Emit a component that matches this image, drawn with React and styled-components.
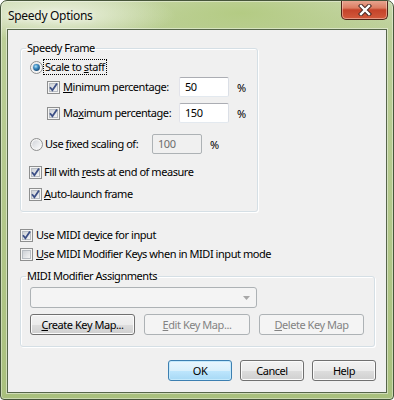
import React from 'react';
import styled, { createGlobalStyle } from 'styled-components';

const GlobalStyle = createGlobalStyle`
    html, body {
        margin: 0;
        padding: 0;
        background: #ffffff;
    }
    body {
        font-family: "Noto Sans", "DejaVu Sans", sans-serif;
        font-size: 11px;
        letter-spacing: -0.45px;
        color: #000;
    }
`;

const Window = styled.div`
    width: 394px;
    height: 400px;
    box-sizing: border-box;
    display: flex;
    flex-direction: column;
    border: 1px solid #46553a;
    border-radius: 7px 7px 4px 4px;
    overflow: hidden;
    background:
        radial-gradient(ellipse 120px 26px at 55px 14px, rgba(238, 243, 226, 0.95), rgba(238, 243, 226, 0)),
        radial-gradient(ellipse 160px 40px at 240px 12px, rgba(178, 202, 128, 0.9), rgba(178, 202, 128, 0)),
        linear-gradient(to bottom, #c9d8ad 0px, #bccf98 30px, #a9c07d 100%);
    box-shadow: inset 0 0 0 1px rgba(255, 255, 255, 0.4);
`;

const TitleBar = styled.div`
    height: 28px;
    flex: none;
    display: flex;
    align-items: flex-start;
    justify-content: space-between;
    padding-left: 7px;
`;

const Title = styled.div`
    margin-top: 7px;
    font-size: 12px;
    line-height: 15px;
    letter-spacing: -0.3px;
    color: #0a0a0a;
    text-shadow: 0 0 6px rgba(255, 255, 255, 0.9);
`;

const CloseButton = styled.div`
    width: 47px;
    height: 20px;
    margin-right: 5px;
    margin-top: -1px;
    box-sizing: border-box;
    border: 1px solid #4f2418;
    border-top: none;
    border-radius: 0 0 5px 5px;
    background: linear-gradient(to bottom, #e9a995 0%, #dc7d62 42%, #c5432a 52%, #d25a3c 100%);
    box-shadow: inset 0 0 0 1px rgba(255, 230, 220, 0.45);
    display: flex;
    align-items: center;
    justify-content: center;
`;

const Client = styled.div`
    flex: 1;
    margin: 0 6px 6px 6px;
    border: 1px solid #56664a;
    box-shadow: 0 0 0 1px rgba(255, 255, 255, 0.45);
    background: #f0f0f0;
    padding: 11px 10px 0 12px;
    display: flex;
    flex-direction: column;
    align-items: flex-start;
`;

const GroupBox = styled.fieldset`
    margin: ${p => p.$mt || 0}px 0 0 0;
    padding: 0;
    width: ${p => p.$width}px;
    box-sizing: border-box;
    border: 1px solid #d5dfe5;
    border-radius: 3px;
    box-shadow: inset 1px 1px 0 #fff, 1px 1px 0 #fff;
    min-width: 0;
`;

const Caption = styled.legend`
    padding: 0 1px;
    margin-left: 5px;
    line-height: 14px;
`;

const GroupBody = styled.div`
    padding: ${p => p.$pad};
`;

const Row = styled.div`
    display: flex;
    align-items: center;
    height: ${p => p.$h || 16}px;
    margin-top: ${p => p.$mt || 0}px;
    padding-left: ${p => p.$indent || 0}px;
`;

const Label = styled.span`
    flex: none;
    width: ${p => (p.$w ? `${p.$w}px` : 'auto')};
    margin-left: ${p => (p.$gap === undefined ? 2 : p.$gap)}px;
    white-space: nowrap;
    line-height: 14px;
    ${p => p.$focus && `
        outline: 1px dotted #000;
        outline-offset: 0;
        padding: 0 1px;
        margin-left: 1px;
    `}
`;

const U = styled.span`
    text-decoration: underline;
    text-underline-offset: 1px;
`;

const TextBox = styled.div`
    flex: none;
    width: 50px;
    height: 20px;
    box-sizing: border-box;
    border: 1px solid;
    border-radius: 2px;
    border-color: ${p => (p.$disabled ? '#adb2b5' : '#abadb3 #dbdfe6 #e3e9ef #e2e3ea')};
    background: ${p => (p.$disabled ? '#f0f0f0' : '#fff')};
    color: ${p => (p.$disabled ? '#6d6d6d' : '#000')};
    padding-left: 5px;
    line-height: 18px;
`;

const Percent = styled.span`
    margin-left: 8px;
    color: #000;
`;

const Combo = styled.div`
    width: 227px;
    height: 21px;
    box-sizing: border-box;
    border: 1px solid #adb2b5;
    border-radius: 3px;
    background: #f4f4f4;
    display: flex;
    align-items: center;
    justify-content: flex-end;
    padding-right: 6px;
`;

const ButtonRow = styled.div`
    display: flex;
    gap: ${p => p.$gap}px;
    margin-top: ${p => p.$mt || 0}px;
    align-self: ${p => (p.$end ? 'flex-end' : 'auto')};
`;

const buttonSkins = {
    normal: `
        border-color: #707070;
        background: linear-gradient(#f2f2f2 0%, #ebebeb 50%, #dddddd 51%, #cfcfcf 100%);
        box-shadow: inset 0 0 0 1px #fbfbfb;
        color: #000;
    `,
    default: `
        border-color: #3c7fb1;
        background: linear-gradient(#eaf6fd 0%, #d9f0fc 50%, #bee6fd 51%, #a7d9f5 100%);
        box-shadow: inset 0 0 0 1px #c4e9fc;
        color: #000;
    `,
    disabled: `
        border-color: #adb2b5;
        background: #f4f4f4;
        color: #838383;
    `,
};

const Button = styled.div`
    width: ${p => p.$w}px;
    height: 21px;
    box-sizing: border-box;
    border: 1px solid;
    border-radius: 3px;
    display: flex;
    align-items: center;
    justify-content: center;
    ${p => buttonSkins[p.$skin || 'normal']}
`;

const CheckBox = ({ checked }) => (
    <svg width="13" height="13" viewBox="0 0 13 13" style={{ flex: 'none' }}>
        <defs>
            <linearGradient id="cbFill" x1="0" y1="0" x2="1" y2="1">
                <stop offset="0" stopColor="#cbcfd5" />
                <stop offset="1" stopColor="#f6f6f6" />
            </linearGradient>
        </defs>
        <rect x="0.5" y="0.5" width="12" height="12" fill="#f4f4f4" stroke="#8e8f8f" />
        <rect x="2.5" y="2.5" width="8" height="8" fill="url(#cbFill)" stroke="#b7bcc2" />
        {checked && (
            <path d="M3 6.2 L5.4 9.3 L10 2.6" fill="none" stroke="#3c4f86" strokeWidth="1.8" />
        )}
    </svg>
);

const Radio = ({ checked }) => (
    <svg width="13" height="13" viewBox="0 0 13 13" style={{ flex: 'none' }}>
        <defs>
            <linearGradient id="rbFill" x1="0" y1="0" x2="1" y2="1">
                <stop offset="0" stopColor="#d2d5da" />
                <stop offset="1" stopColor="#fafafa" />
            </linearGradient>
            <radialGradient id="rbDot" cx="0.4" cy="0.35" r="0.7">
                <stop offset="0" stopColor="#b4e4f8" />
                <stop offset="0.45" stopColor="#3c8dc4" />
                <stop offset="1" stopColor="#16446e" />
            </radialGradient>
        </defs>
        <circle cx="6.5" cy="6.5" r="6" fill="#f4f4f4" stroke="#8e8f8f" />
        <circle cx="6.5" cy="6.5" r="4.3" fill="url(#rbFill)" />
        {checked && <circle cx="6.5" cy="6.5" r="3.4" fill="url(#rbDot)" />}
    </svg>
);

const CloseGlyph = () => (
    <svg width="14" height="12" viewBox="0 0 14 12">
        <path d="M3 2 L11 10 M11 2 L3 10" stroke="#4a2a24" strokeWidth="4.4" strokeLinecap="square" />
        <path d="M3 2 L11 10 M11 2 L3 10" stroke="#ffffff" strokeWidth="2.4" strokeLinecap="square" />
    </svg>
);

const ComboArrow = () => (
    <svg width="7" height="4" viewBox="0 0 7 4">
        <path d="M0 0 H7 L3.5 4 Z" fill="#a7a7a7" />
    </svg>
);

const App = () => (
    <>
        <GlobalStyle />
        <Window>
            <TitleBar>
                <Title>Speedy Options</Title>
                <CloseButton>
                    <CloseGlyph />
                </CloseButton>
            </TitleBar>
            <Client>
                <GroupBox $width={238}>
                    <Caption>Speedy Frame</Caption>
                    <GroupBody $pad="4px 0 9px 0">
                        <Row $indent={9}>
                            <Radio checked />
                            <Label $focus>Scale to <U>s</U>taff</Label>
                        </Row>
                        <Row $h={20} $mt={2} $indent={26}>
                            <CheckBox checked />
                            <Label $gap={3} $w={116}><U>M</U>inimum percentage:</Label>
                            <TextBox>50</TextBox>
                            <Percent>%</Percent>
                        </Row>
                        <Row $h={20} $mt={6} $indent={26}>
                            <CheckBox checked />
                            <Label $gap={3} $w={116}>Ma<U>x</U>imum percentage:</Label>
                            <TextBox>150</TextBox>
                            <Percent>%</Percent>
                        </Row>
                        <Row $h={20} $mt={11} $indent={9}>
                            <Radio />
                            <Label $w={107}>Use <U>f</U>ixed scaling of:</Label>
                            <TextBox $disabled>100</TextBox>
                            <Percent>%</Percent>
                        </Row>
                        <Row $mt={10} $indent={8}>
                            <CheckBox checked />
                            <Label>Fill with <U>r</U>ests at end of measure</Label>
                        </Row>
                        <Row $mt={6} $indent={8}>
                            <CheckBox checked />
                            <Label><U>A</U>uto-launch frame</Label>
                        </Row>
                    </GroupBody>
                </GroupBox>

                <Row $mt={15}>
                    <CheckBox checked />
                    <Label $gap={3}>Use MIDI de<U>v</U>ice for input</Label>
                </Row>
                <Row $mt={3}>
                    <CheckBox />
                    <Label $gap={3}><U>U</U>se MIDI Modifier Keys when in MIDI input mode</Label>
                </Row>

                <GroupBox $width={355} $mt={7}>
                    <Caption>MIDI Modifier Assignments</Caption>
                    <GroupBody $pad="4px 0 11px 9px">
                        <Combo>
                            <ComboArrow />
                        </Combo>
                        <ButtonRow $gap={9} $mt={6}>
                            <Button $w={105}><U>C</U>reate Key Map...</Button>
                            <Button $w={106} $skin="disabled"><U>E</U>dit Key Map...</Button>
                            <Button $w={105} $skin="disabled"><U>D</U>elete Key Map</Button>
                        </ButtonRow>
                    </GroupBody>
                </GroupBox>

                <ButtonRow $gap={8} $mt={13} $end>
                    <Button $w={64} $skin="default">OK</Button>
                    <Button $w={64}>Cancel</Button>
                    <Button $w={64}>Help</Button>
                </ButtonRow>
            </Client>
        </Window>
    </>
);

export default App;
